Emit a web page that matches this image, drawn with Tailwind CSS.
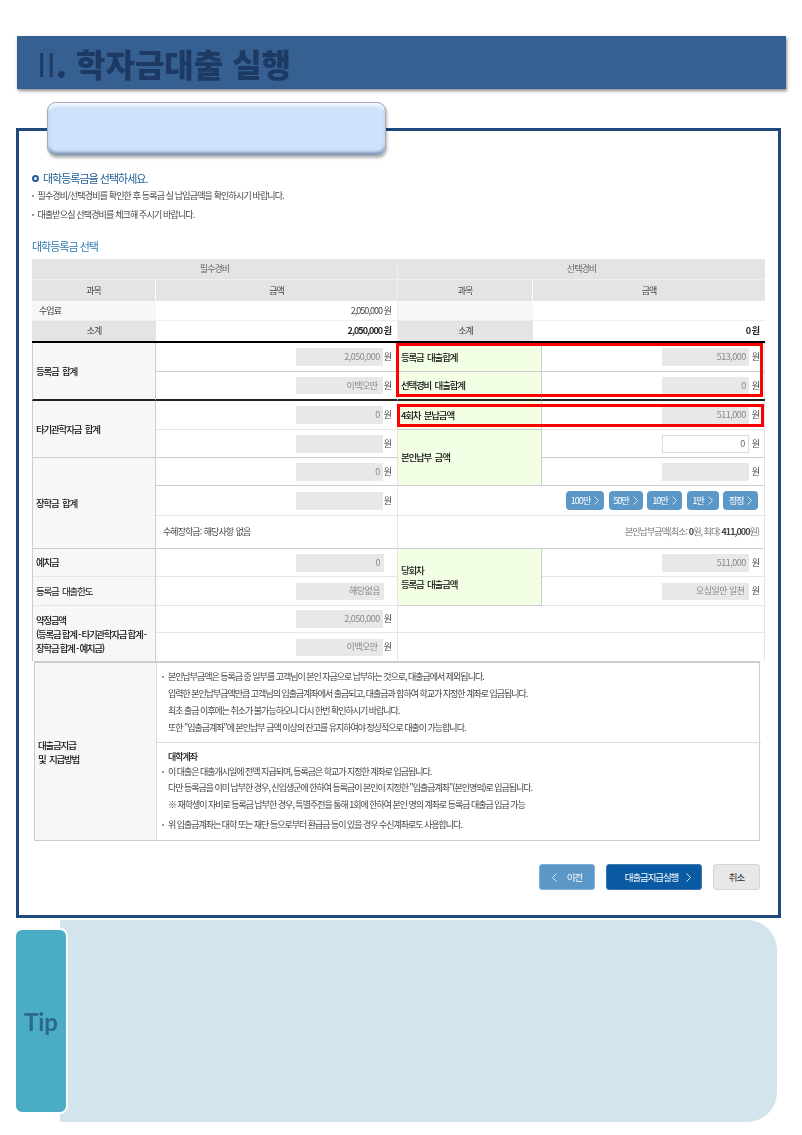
<!DOCTYPE html>
<html lang="ko">
<head>
<meta charset="utf-8">
<script src="https://cdn.jsdelivr.net/npm/@tailwindcss/browser@4"></script>
<title>학자금대출 실행</title>
</head>
<body class="bg-white font-['Noto_Sans_CJK_KR','Noto_Sans',sans-serif] text-[9px] text-[#444] tracking-[-0.95px]">
<div class="w-[802px] h-[1135px] overflow-hidden pt-[36px]">

  <header class="ml-[17px] w-[769px] h-[53px] bg-[#366092] shadow-[1px_2px_3px_rgba(0,0,0,0.45)] flex items-center pl-[20px]">
    <h1 class="text-[32px] leading-none font-black tracking-[0px] text-[#1c3a63] blur-[0.6px]"><span class="font-normal">II</span>. 학자금대출 실행</h1>
  </header>

  <main class="relative mt-[39px] ml-[16px] w-[765px] h-[790px] border-[3px] border-[#1f497d] pt-[39px] px-[13px]">
    <div class="absolute left-[28px] top-[-29px] w-[339px] h-[54px] rounded-[9px] border border-[#a5adb8] bg-[#cfe2fb] shadow-[inset_0_3px_3px_rgba(255,255,255,0.8),inset_0_-3px_3px_rgba(70,90,120,0.55),1px_2px_3px_rgba(0,0,0,0.3)]"></div>

    <div class="blur-[0.3px]">
    <div class="flex items-center gap-[4px] h-[16px] text-[11px] tracking-[-1px] text-[#1f5c94]">
      <span class="w-[7px] h-[7px] rounded-full border-2 border-[#1f5c94]"></span>
      <span>대학등록금을 선택하세요.</span>
    </div>
    <p class="mt-[1px] h-[18px] leading-[18px] flex items-center tracking-[-0.85px]"><span class="w-[2px] h-[2px] bg-[#999] mr-[3.5px]"></span>필수경비/선택경비를 확인한 후 등록금 실 납입금액을 확인하시기 바랍니다.</p>
    <p class="mt-[1px] h-[18px] leading-[18px] flex items-center tracking-[-0.85px]"><span class="w-[2px] h-[2px] bg-[#999] mr-[3.5px]"></span>대출받으실 선택경비를 체크해 주시기 바랍니다.</p>
    <h2 class="mt-[13px] h-[18px] leading-[18px] text-[11px] tracking-[-1px] text-[#2f7ab0] font-normal">대학등록금 선택</h2>

    <section class="mt-[4px] w-[733px]">
      <div class="grid grid-cols-[124px_242px_135px_232px] grid-rows-[21px_21px_20px_20px] text-center">
        <div class="col-span-2 flex items-center justify-center bg-[#e4e4e4] border-b border-[#eee] border-r border-r-[#eee] text-[#666]">필수경비</div>
        <div class="col-span-2 flex items-center justify-center bg-[#e4e4e4] border-b border-[#eee] text-[#666]">선택경비</div>
        <div class="flex items-center justify-center bg-[#e4e4e4] border-r border-white">과목</div>
        <div class="flex items-center justify-center bg-[#e4e4e4] border-r border-[#eee]">금액</div>
        <div class="flex items-center justify-center bg-[#e4e4e4] border-r border-white">과목</div>
        <div class="flex items-center justify-center bg-[#e4e4e4]">금액</div>
        <div class="flex items-center pl-[7px] bg-[#f7f7f9] border-b border-[#eee]">수업료</div>
        <div class="flex items-center justify-end pr-[6px] border-b border-r border-[#eee]">2,050,000 원</div>
        <div class="bg-[#f7f7f9] border-b border-[#eee]"></div>
        <div class="border-b border-[#eee]"></div>
        <div class="flex items-center justify-center bg-[#e4e4e4]">소계</div>
        <div class="flex items-center justify-end pr-[6px] font-bold text-[#222] border-r border-[#eee]">2,050,000 원</div>
        <div class="flex items-center justify-center bg-[#e4e4e4]">소계</div>
        <div class="flex items-center justify-end pr-[6px] font-bold text-[#222]">0 원</div>
      </div>
      <div class="h-[2px] bg-black"></div>

      <div class="relative grid grid-cols-[124px_242px_144px_223px] grid-rows-[29px_29px_29px_28px_28px_30px_33px_28px_29px_27px_28px] border-r border-[#e5e5e5]">
        <div class="row-span-2 flex items-center pl-[3px] bg-[#f7f7f9] border-l border-r border-[#ccc] border-b-2 border-b-[#222] text-[#111] font-medium text-[9.5px] tracking-[-1.2px] [word-spacing:2px]">등록금 합계</div>
        <div class="flex items-center justify-end pr-[6px] border-b border-[#ccc] border-r border-r-[#e5e5e5]"><span class="w-[87px] h-[18px] bg-[#e8e8e8] flex items-center justify-end pr-[3px] mr-[1px] tracking-[-0.5px] text-[#888]">2,050,000</span>원</div>
        <div class="flex items-center pl-[3px] bg-[#f2ffe5] border-r border-[#ccc] border-b text-[#111] font-medium text-[9.5px] tracking-[-1.2px] [word-spacing:2px]">등록금 대출합계</div>
        <div class="flex items-center justify-end pr-[6px] border-b border-[#ccc]"><span class="w-[87px] h-[18px] bg-[#e8e8e8] flex items-center justify-end pr-[3px] mr-[3px] tracking-[-0.5px] text-[#888]">513,000</span>원</div>

        <div class="flex items-center justify-end pr-[6px] border-b-2 border-[#222] border-r border-r-[#e5e5e5]"><span class="w-[87px] h-[17px] bg-[#e8e8e8] flex items-center justify-end pr-[5px] mr-[1px] tracking-[-0.5px] text-[#888]">이백오만</span>원</div>
        <div class="flex items-center pl-[3px] bg-[#f2ffe5] border-r border-[#ccc] border-b-2 border-b-[#222] text-[#111] font-medium text-[9.5px] tracking-[-1.2px] [word-spacing:2px]">선택경비 대출합계</div>
        <div class="flex items-center justify-end pr-[6px] border-b-2 border-[#222]"><span class="w-[87px] h-[17px] bg-[#e8e8e8] flex items-center justify-end pr-[3px] mr-[3px] tracking-[-0.5px] text-[#888]">0</span>원</div>

        <div class="row-span-2 flex items-center pl-[3px] bg-[#f7f7f9] border-l border-r border-[#ccc] border-b text-[#111] font-medium text-[9.5px] tracking-[-1.2px] [word-spacing:2px]">타기관학자금 합계</div>
        <div class="flex items-center justify-end pr-[6px] border-b border-[#e5e5e5] border-r"><span class="w-[87px] h-[18px] bg-[#e8e8e8] flex items-center justify-end pr-[3px] mr-[1px] tracking-[-0.5px] text-[#888]">0</span>원</div>
        <div class="flex items-center pl-[3px] bg-[#f2ffe5] border-r border-[#ccc] border-b text-[#111] font-medium text-[9.5px] tracking-[-1.2px] [word-spacing:2px]">4회차 분납금액</div>
        <div class="flex items-center justify-end pr-[6px] border-b border-[#e5e5e5]"><span class="w-[87px] h-[18px] bg-[#e8e8e8] flex items-center justify-end pr-[3px] mr-[3px] tracking-[-0.5px] text-[#888]">511,000</span>원</div>

        <div class="flex items-center justify-end pr-[6px] border-b border-[#ccc] border-r border-r-[#e5e5e5]"><span class="w-[87px] h-[18px] bg-[#e8e8e8] mr-[1px]"></span>원</div>
        <div class="row-span-2 flex items-center pl-[3px] bg-[#f2ffe5] border-r border-[#ccc] border-b text-[#111] font-medium text-[9.5px] tracking-[-1.2px] [word-spacing:2px]">본인납부 금액</div>
        <div class="flex items-center justify-end pr-[6px] border-b border-[#ccc]"><span class="w-[87px] h-[18px] bg-white border border-[#ddd] flex items-center justify-end pr-[3px] mr-[3px] tracking-[-0.5px] text-[#666]">0</span>원</div>

        <div class="row-span-3 flex items-center pl-[3px] bg-[#f7f7f9] border-l border-r border-[#ccc] border-b text-[#111] font-medium text-[9.5px] tracking-[-1.2px] [word-spacing:2px]">장학금 합계</div>
        <div class="flex items-center justify-end pr-[6px] border-b border-[#ccc] border-r border-r-[#e5e5e5]"><span class="w-[87px] h-[18px] bg-[#e8e8e8] flex items-center justify-end pr-[3px] mr-[1px] tracking-[-0.5px] text-[#888]">0</span>원</div>
        <div class="flex items-center justify-end pr-[6px] border-b border-[#ccc]"><span class="w-[87px] h-[18px] bg-[#e8e8e8] mr-[3px]"></span>원</div>

        <div class="flex items-center justify-end pr-[6px] border-b border-[#e5e5e5] border-r"><span class="w-[87px] h-[18px] bg-[#e8e8e8] mr-[1px]"></span>원</div>
        <div class="col-span-2 flex items-center justify-end gap-[4.5px] pr-[7px] border-b border-[#e5e5e5] text-white">
          <button class="w-[38px] h-[19px] rounded-[4px] bg-[#5b97c7] flex items-center justify-center gap-[4px]">100만<svg class="w-[5px] h-[9px]" viewBox="0 0 5 9" fill="none" stroke="#d7e6f2"><path d="M0.5 0.5l4 4-4 4"/></svg></button>
          <button class="w-[34px] h-[19px] rounded-[4px] bg-[#5b97c7] flex items-center justify-center gap-[4px]">50만<svg class="w-[5px] h-[9px]" viewBox="0 0 5 9" fill="none" stroke="#d7e6f2"><path d="M0.5 0.5l4 4-4 4"/></svg></button>
          <button class="w-[35px] h-[19px] rounded-[4px] bg-[#5b97c7] flex items-center justify-center gap-[4px]">10만<svg class="w-[5px] h-[9px]" viewBox="0 0 5 9" fill="none" stroke="#d7e6f2"><path d="M0.5 0.5l4 4-4 4"/></svg></button>
          <button class="w-[32px] h-[19px] rounded-[4px] bg-[#5b97c7] flex items-center justify-center gap-[4px]">1만<svg class="w-[5px] h-[9px]" viewBox="0 0 5 9" fill="none" stroke="#d7e6f2"><path d="M0.5 0.5l4 4-4 4"/></svg></button>
          <button class="w-[35px] h-[19px] rounded-[4px] bg-[#5b97c7] flex items-center justify-center gap-[4px]">정정<svg class="w-[5px] h-[9px]" viewBox="0 0 5 9" fill="none" stroke="#d7e6f2"><path d="M0.5 0.5l4 4-4 4"/></svg></button>
        </div>

        <div class="flex items-center pl-[7px] border-b border-[#ccc] border-r border-r-[#e5e5e5] [word-spacing:1px]">수혜장학금: 해당사항 없음</div>
        <div class="col-span-2 flex items-center justify-end pr-[6px] border-b border-[#ccc] text-[#777]">본인납부금액(최소:&nbsp;<b class="text-[#444]">0</b>원, 최대:&nbsp;<b class="text-[#444]">411,000</b>원)</div>

        <div class="flex items-center pl-[3px] bg-[#f7f7f9] border-l border-r border-[#ccc] border-b border-b-[#e5e5e5] text-[#111] font-medium text-[9.5px] tracking-[-1.2px] [word-spacing:2px]">예치금</div>
        <div class="flex items-center justify-end pr-[13px] border-b border-[#e5e5e5] border-r"><span class="w-[88px] h-[18px] bg-[#e8e8e8] flex items-center justify-end pr-[4px] tracking-[-0.5px] text-[#888]">0</span></div>
        <div class="row-span-2 flex flex-col justify-center leading-[14px] pl-[3px] bg-[#f2ffe5] border-r border-[#ccc] border-b text-[#111] font-medium text-[9.5px] tracking-[-1.2px] [word-spacing:2px]"><span>당회차</span><span>등록금 대출금액</span></div>
        <div class="flex items-center justify-end pr-[6px] border-b border-[#e5e5e5]"><span class="w-[87px] h-[18px] bg-[#e8e8e8] flex items-center justify-end pr-[3px] mr-[3px] tracking-[-0.5px] text-[#888]">511,000</span>원</div>

        <div class="flex items-center pl-[3px] bg-[#f7f7f9] border-l border-r border-[#ccc] border-b border-b-[#e5e5e5] text-[#111] text-[9.5px] tracking-[-1.2px] [word-spacing:2px]">등록금 대출한도</div>
        <div class="flex items-center justify-end pr-[13px] border-b border-[#e5e5e5] border-r"><span class="w-[88px] h-[17px] bg-[#e8e8e8] flex items-center justify-end pr-[4px] tracking-[-0.5px] text-[#888]">해당없음</span></div>
        <div class="flex items-center justify-end pr-[6px] border-b border-[#e5e5e5]"><span class="w-[87px] h-[17px] bg-[#e8e8e8] flex items-center justify-end pr-[4px] mr-[3px] tracking-[-0.5px] text-[#888]">오십일만 일천</span>원</div>

        <div class="row-span-2 flex flex-col justify-center leading-[14px] pl-[3px] bg-[#f7f7f9] border-l border-r border-[#ccc] text-[#111] font-medium text-[9.5px] tracking-[-1.3px] whitespace-nowrap"><span>약정금액</span><span>(등록금 합계 - 타기관학자금 합계 -</span><span>장학금 합계 - 예치금)</span></div>
        <div class="flex items-center justify-end pr-[6px] border-b border-[#e5e5e5] border-r"><span class="w-[87px] h-[18px] bg-[#e8e8e8] flex items-center justify-end pr-[3px] mr-[1px] tracking-[-0.5px] text-[#888]">2,050,000</span>원</div>
        <div class="col-span-2 border-b border-[#e5e5e5]"></div>

        <div class="flex items-center justify-end pr-[6px] border-r border-[#e5e5e5]"><span class="w-[87px] h-[17px] bg-[#e8e8e8] flex items-center justify-end pr-[5px] mr-[1px] tracking-[-0.5px] text-[#888]">이백오만</span>원</div>
        <div class="col-span-2"></div>

        <div class="absolute left-[364px] top-0 w-[367px] h-[54px] border-[3px] border-[#f00]"></div>
        <div class="absolute left-[365px] top-[61px] w-[367px] h-[23px] border-[3px] border-[#f00]"></div>
      </div>

      <div class="ml-[2px] w-[726px] h-[180px] grid grid-cols-[122px_604px] border-t-2 border-b border-r border-l border-[#ccc]">
        <div class="flex flex-col justify-center leading-[14px] pl-[3px] bg-[#f7f7f9] border-r border-[#ddd] text-[#111] font-medium text-[9.5px] tracking-[-1.2px] [word-spacing:2px]"><span>대출금지급</span><span>및 지급방법</span></div>
        <div class="flex flex-col pl-[5px] tracking-[-1.02px]">
          <div class="h-[80px] pt-[5px] -ml-[5px] pl-[5px] border-b border-[#ddd] leading-[17px]">
            <p class="flex items-center"><span class="w-[2px] h-[2px] bg-[#999] mr-[4px]"></span>본인납부금액은 등록금 중 일부를 고객님이 본인 자금으로 납부하는 것으로, 대출금에서 제외됩니다.</p>
            <p class="pl-[6px]">입력한 본인납부금액만큼 고객님의 입출금계좌에서 출금되고, 대출금과 합하여 학교가 지정한 계좌로 입금됩니다.</p>
            <p class="pl-[6px]">최초 출금 이후에는 취소가 불가능하오니 다시 한번 확인하시기 바랍니다.</p>
            <p class="pl-[6px]">또한 "입출금계좌"에 본인납부 금액 이상의 잔고를 유지하여야 정상적으로 대출이 가능합니다.</p>
          </div>
          <div class="pt-[8px] leading-[16.5px]">
            <p class="pl-[6px] leading-[12.5px] text-[#111] font-medium">대학계좌</p>
            <p class="flex items-center"><span class="w-[2px] h-[2px] bg-[#999] mr-[4px]"></span>이 대출은 대출개시일에 전액 지급되며, 등록금은 학교가 지정한 계좌로 입금됩니다.</p>
            <p class="pl-[6px]">다만 등록금을 이미 납부한 경우, 신입생군에 한하여 등록금이 본인이 지정한 "입출금계좌"(본인명의)로 입금됩니다.</p>
            <p class="pl-[6px]">※ 재학생이 자비로 등록금 납부한 경우, 특별주전을 통해 1회에 한하여 본인 명의 계좌로 등록금 대출금 입금 가능</p>
            <p class="mt-[4px] flex items-center"><span class="w-[2px] h-[2px] bg-[#999] mr-[4px]"></span>위 입출금계좌는 대학 또는 재단 등으로부터 환급금 등이 있을 경우 수신계좌로도 사용합니다.</p>
          </div>
        </div>
      </div>

      <div class="mt-[23px] flex justify-end gap-[11px] w-[728px] text-[9.5px] tracking-[-1.1px]">
        <button class="w-[56px] h-[26px] rounded-[3px] bg-[#5b97c7] border border-[#7fb0d6] text-white flex items-center justify-center gap-[10px]"><svg class="w-[5px] h-[9px]" viewBox="0 0 5 9" fill="none" stroke="#d7e6f2"><path d="M4.5 0.5l-4 4 4 4"/></svg>이전</button>
        <button class="w-[96px] h-[26px] rounded-[3px] bg-[#0a5ba3] border border-[#3a78b2] text-white flex items-center justify-center gap-[8px] pl-[8px]">대출금지급실행<svg class="w-[5px] h-[9px]" viewBox="0 0 5 9" fill="none" stroke="#d7e6f2"><path d="M0.5 0.5l4 4-4 4"/></svg></button>
        <button class="w-[47px] h-[26px] rounded-[3px] bg-[#e8e8e8] border border-[#d5d5d5] text-[#333]">취소</button>
      </div>
    </section>
    </div>
  </main>

  <aside class="relative mt-[2px] ml-[60px] w-[717px] h-[202px] bg-[#d4e4ec] rounded-r-[30px] rounded-l-[2px]">
    <div class="absolute left-[-46px] top-[8px] w-[54px] h-[186px] rounded-[8px] border-[2px] border-white bg-[#4bacc6] flex items-center justify-center">
      <span class="mt-[2px] font-['Lato',sans-serif] text-[24px] font-bold tracking-normal text-[#2d6a86] blur-[0.4px]">Tip</span>
    </div>
  </aside>
</div>
</body>
</html>
